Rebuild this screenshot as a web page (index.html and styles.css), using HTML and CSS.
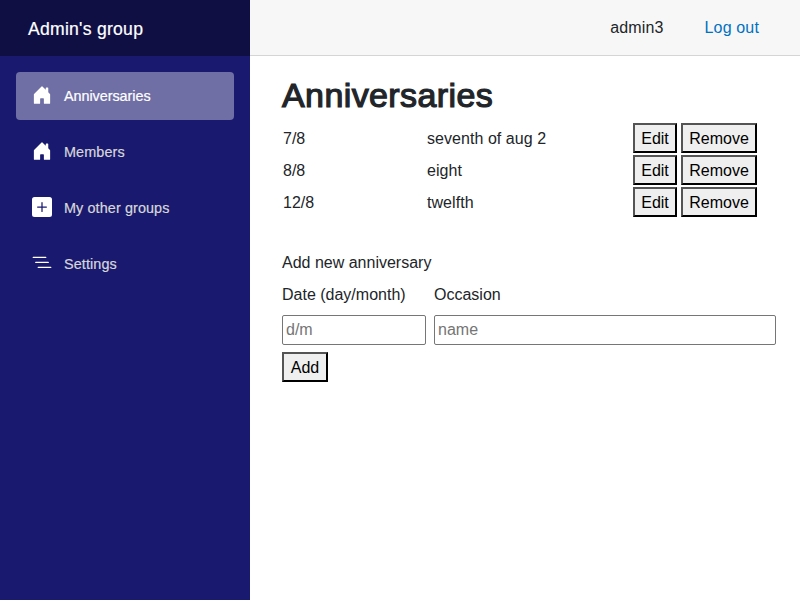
FILE: index.html
```html
<!DOCTYPE html>
<html lang="en">
<head>
<meta charset="utf-8">
<title>Anniversaries</title>
<link rel="stylesheet" href="styles.css">
</head>
<body>
<div class="page">
  <aside class="sidebar">
    <div class="brand-row"><a class="brand">Admin's group</a></div>
    <nav class="nav">
      <a class="nav-link active"><svg class="icon" viewBox="0 0 16 16"><path d="M6.5 14.5v-3.505c0-.245.25-.495.5-.495h2c.25 0 .5.25.5.5v3.5a.5.5 0 0 0 .5.5h4a.5.5 0 0 0 .5-.5v-7a.5.5 0 0 0-.146-.354L13 5.793V2.5a.5.5 0 0 0-.5-.5h-1a.5.5 0 0 0-.5.5v1.293L8.354 1.146a.5.5 0 0 0-.708 0l-6 6A.5.5 0 0 0 1.5 7.5v7a.5.5 0 0 0 .5.5h4a.5.5 0 0 0 .5-.5Z"/></svg><span>Anniversaries</span></a>
      <a class="nav-link"><svg class="icon" viewBox="0 0 16 16"><path d="M6.5 14.5v-3.505c0-.245.25-.495.5-.495h2c.25 0 .5.25.5.5v3.5a.5.5 0 0 0 .5.5h4a.5.5 0 0 0 .5-.5v-7a.5.5 0 0 0-.146-.354L13 5.793V2.5a.5.5 0 0 0-.5-.5h-1a.5.5 0 0 0-.5.5v1.293L8.354 1.146a.5.5 0 0 0-.708 0l-6 6A.5.5 0 0 0 1.5 7.5v7a.5.5 0 0 0 .5.5h4a.5.5 0 0 0 .5-.5Z"/></svg><span>Members</span></a>
      <a class="nav-link"><svg class="icon" viewBox="0 0 16 16"><path d="M2 0a2 2 0 0 0-2 2v12a2 2 0 0 0 2 2h12a2 2 0 0 0 2-2V2a2 2 0 0 0-2-2H2zm6.5 4.5v3h3a.5.5 0 0 1 0 1h-3v3a.5.5 0 0 1-1 0v-3h-3a.5.5 0 0 1 0-1h3v-3a.5.5 0 0 1 1 0z"/></svg><span>My other groups</span></a>
      <a class="nav-link"><svg class="icon" viewBox="0 0 16 16"><path fill-rule="evenodd" d="M4.5 11.5A.5.5 0 0 1 5 11h10a.5.5 0 0 1 0 1H5a.5.5 0 0 1-.5-.5zm-2-4A.5.5 0 0 1 3 7h10a.5.5 0 0 1 0 1H3a.5.5 0 0 1-.5-.5zm-2-4A.5.5 0 0 1 1 3h10a.5.5 0 0 1 0 1H1a.5.5 0 0 1-.5-.5z"/></svg><span>Settings</span></a>
    </nav>
  </aside>
  <main class="main">
    <header class="top-row"><span class="user">admin3</span><a class="logout">Log out</a></header>
    <article class="content">
      <h1>Anniversaries</h1>
      <table class="dates">
        <tr><td class="date">7/8</td><td class="name">seventh of aug 2</td><td class="actions"><button>Edit</button><button class="remove">Remove</button></td></tr>
        <tr><td class="date">8/8</td><td class="name">eight</td><td class="actions"><button>Edit</button><button class="remove">Remove</button></td></tr>
        <tr><td class="date">12/8</td><td class="name">twelfth</td><td class="actions"><button>Edit</button><button class="remove">Remove</button></td></tr>
      </table>
      <form class="add-form">
        <p>Add new anniversary</p>
        <div class="fields">
          <label for="date">Date (day/month)</label>
          <label for="occasion">Occasion</label>
          <input id="date" placeholder="d/m">
          <input id="occasion" placeholder="name">
        </div>
        <button class="add" type="button">Add</button>
      </form>
    </article>
  </main>
</div>
</body>
</html>
```
FILE: styles.css
```css
* { box-sizing: border-box; }
body {
  margin: 0;
  background: #fff;
  color: #212529;
  font: 16px/24px "Liberation Sans", Arial, sans-serif;
}
.page { display: flex; height: 600px; }
.sidebar { width: 250px; flex: none; background: #191970; }
.brand-row {
  height: 56px;
  padding: 1px 0 0 28px;
  display: flex;
  align-items: center;
  background: #0f0f43;
}
.brand { color: #fff; font-size: 17.6px; letter-spacing: 0.25px; -webkit-text-stroke: 0.2px; }
.nav { display: flex; flex-direction: column; gap: 8px; padding: 16px; }
.nav-link {
  display: flex;
  align-items: center;
  height: 48px;
  padding: 0 16px;
  border-radius: 4px;
  color: #d7d7d7;
  font-size: 14.4px;
  letter-spacing: 0.1px;
  -webkit-text-stroke: 0.2px;
}
.active { background: #6f6fa5; color: #fff; letter-spacing: -0.05px; }
.icon { width: 20px; height: 20px; margin: 0 12px 2px 0; fill: #fff; }
.main { flex: 1; min-width: 0; }
.top-row {
  display: flex;
  justify-content: flex-end;
  align-items: center;
  height: 56px;
  padding-right: 41px;
  background: #f7f7f7;
  border-bottom: 1px solid #d6d5d5;
  letter-spacing: 0.15px;
}
.logout { margin-left: 41px; color: #0071c1; }
.content { padding: 19px 24px 0 32px; }
h1 {
  margin: 0 0 7px;
  font-size: 34px;
  line-height: 41px;
  font-weight: 400;
  letter-spacing: 0.4px;
  -webkit-text-stroke: 1.2px;
}
.dates { width: 476px; border-collapse: collapse; table-layout: fixed; }
td { height: 32px; padding: 0 1px; vertical-align: middle; }
.date { width: 144px; }
.name { width: 206px; letter-spacing: 0.05px; }
.actions { padding-bottom: 2px; font-size: 0; }
button {
  height: 30px;
  padding: 2px 0 0;
  border: 2px outset #000;
  border-radius: 0;
  background: #efefef;
  color: #000;
  font: 16px/24px "Liberation Sans", Arial, sans-serif;
  vertical-align: middle;
}
.actions button { width: 44px; }
.actions .remove { width: 76px; margin-left: 4px; }
.add-form { margin-top: 32px; }
.add-form p { margin: 0 0 8px; }
.fields {
  display: grid;
  grid-template-columns: 144px 342px;
  column-gap: 8px;
  row-gap: 8px;
}
input {
  width: 100%;
  height: 30px;
  padding: 1px 3px;
  border: 1px solid #767676;
  border-radius: 2px;
  background: #fff;
  font: 16px/24px "Liberation Sans", Arial, sans-serif;
}
input::placeholder { color: #757575; }
.add { display: block; width: 46px; margin-top: 7px; }
```
